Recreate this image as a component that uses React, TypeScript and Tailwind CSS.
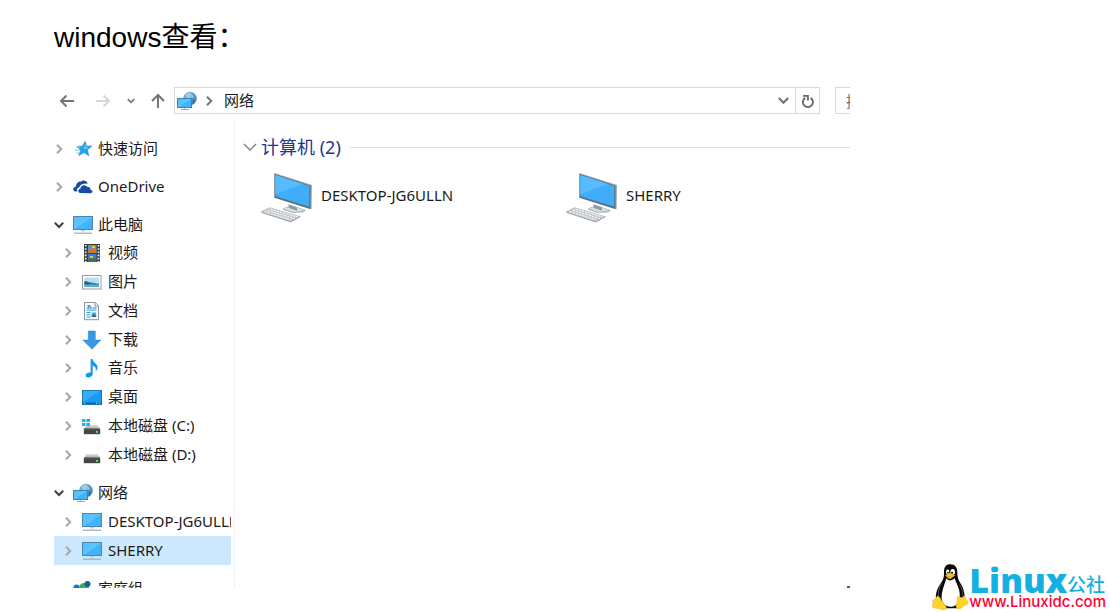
import React from "react";

type IconProps = { className?: string };

function Chevron({ open = false, className = "" }: { open?: boolean; className?: string }) {
  return (
    <svg viewBox="0 0 10 10" className={`h-[10px] w-[10px] shrink-0 ${className}`} fill="none" stroke="currentColor" strokeWidth="2" aria-hidden="true">
      <path d={open ? "M0.8 2.8 5 7 9.2 2.8" : "M3 0.8 7.2 5 3 9.2"} />
    </svg>
  );
}

function Gradients() {
  return (
    <svg className="absolute h-0 w-0" aria-hidden="true">
      <defs>
        <linearGradient id="screen" x1="0" y1="0" x2="1" y2="1">
          <stop offset="0" stopColor="#56bdf8" />
          <stop offset="0.5" stopColor="#5cc4ff" />
          <stop offset="0.52" stopColor="#45b5fa" />
          <stop offset="1" stopColor="#42aff8" />
        </linearGradient>
        <radialGradient id="globe" cx="0.4" cy="0.3" r="0.8">
          <stop offset="0" stopColor="#b4dcf0" />
          <stop offset="0.5" stopColor="#5a9cc8" />
          <stop offset="1" stopColor="#2a6fa5" />
        </radialGradient>
        <linearGradient id="drive" x1="0" y1="0" x2="0" y2="1">
          <stop offset="0" stopColor="#e2e2e2" />
          <stop offset="1" stopColor="#a5a5a5" />
        </linearGradient>
      </defs>
    </svg>
  );
}

function MonitorIcon() {
  return (
    <svg viewBox="0 0 20 20" className="h-5 w-5">
      <rect x="0.5" y="1.5" width="19" height="13" fill="url(#screen)" stroke="#4a87b0" />
      <path d="M8 15h4v1.5H8z" fill="#b8cedb" />
      <path d="M1 18.2h18" stroke="#9fb0bc" strokeWidth="1.3" />
    </svg>
  );
}

function NetworkIcon() {
  return (
    <svg viewBox="0 0 20 20" className="h-5 w-5">
      <circle cx="13" cy="7.5" r="6.7" fill="url(#globe)" />
      <path d="M9 3c2 1 3-1 5 0s0 3 3 3" stroke="#a5d4ea" strokeWidth="1" fill="none" />
      <path d="M16 8c1 1 1 2 0 4" stroke="#2c6f9e" strokeWidth="1.4" fill="none" />
      <rect x="0.5" y="7.5" width="14" height="9" fill="url(#screen)" stroke="#3385bd" />
      <path d="M4 18.5h8M7.5 17v1" stroke="#8fb4cb" />
    </svg>
  );
}

function StarIcon() {
  return (
    <svg viewBox="0 0 20 20" className="h-5 w-5">
      <path d="M12.2 2.4 13.4 7 18.8 7.2 14.4 10.8 15.8 16.8 11 13.6 5.8 16.6 7.6 11.4 4.4 7.4 9.2 7.2z" fill="#25a3ea" stroke="#1584ce" strokeWidth=".6" />
      <path d="M3 8.3h4M2 11h5.2M3.4 14h3" stroke="#77c7ef" strokeWidth="1" />
      <path d="m12 5 1 3 3 .4-5 2z" fill="#6ccafa" />
    </svg>
  );
}

function CloudIcon() {
  return (
    <svg viewBox="0 0 20 20" className="h-5 w-5">
      <path d="M1 14.2C-.6 12 .8 9.6 3 9.4 3 6.4 5.4 4.2 8 4.4 10 2.6 14 3.6 14.8 6.6L11 6.8C8.4 7 6.6 8.6 6.2 10.6 4.2 10.8 3.4 13 4.4 14.6z" fill="#174ba8" />
      <path d="M7.2 16C4.6 15.6 4.8 12 7.4 11.8 7.6 8.4 11.8 6.8 14 9.8c2-.4 3.6 1 3.4 3 2.6.2 2.8 3 .6 3.4z" fill="#174ba8" />
    </svg>
  );
}

function VideoIcon() {
  return (
    <svg viewBox="0 0 20 20" className="h-5 w-5">
      <path d="M2 1h16v18H2z" fill="#3d3d42" />
      <path d="M6 2h8.5v8H6z" fill="#5a91dc" />
      <path d="M6 11h8.5v8H6z" fill="#397bd0" />
      <path d="M6.3 7 8 5l2 2 2-4 2.4 4v3H6.3z" fill="#c87b2d" />
      <path d="M10 3h3v2h-3zM8 13h3v2H8z" fill="#efc73a" />
      <path d="M6 17l3-2 3 1 2.5-2v5H6z" fill="#427450" />
      <path d="M3.7 2v17M16.5 2v17" stroke="#f0f0f0" strokeWidth="1.7" strokeDasharray="1.6 1.6" />
    </svg>
  );
}

function PictureIcon() {
  return (
    <svg viewBox="0 0 20 20" className="h-5 w-5">
      <rect x=".5" y="3.5" width="18.5" height="13.5" fill="#fff" stroke="#929da3" />
      <path d="M2.5 5.5h14.5v9.5H2.5z" fill="#b8e1f7" />
      <path d="M2.5 9c3 0 4 1.4 7 1.6s5 1.4 7.5 1v3.4H2.5z" fill="#397f9f" />
      <path d="M2.5 13.2c5-1.4 9 0 14.5-.7v2.5H2.5z" fill="#5eaed8" />
      <path d="M2.5 9.4c3 0 4 1.6 7.5 2.4l-7.5.4z" fill="#28604f" />
    </svg>
  );
}

function DocumentIcon() {
  return (
    <svg viewBox="0 0 20 20" className="h-5 w-5">
      <path d="M2.5 1.5h10.8l3.2 3.2v14h-14z" fill="#fbfdff" stroke="#8c969d" />
      <path d="M13 1.5v3.7h3.5" fill="#e7ecef" stroke="#8c969d" />
      <path d="M4.5 7h6M5 4.8h3M4.5 9h10M4.5 11.5h4M4.5 13.8h4M4.5 16h4" stroke="#2b9bd6" strokeWidth="1.1" />
      <path d="m6 7 1.4-3L9 7M11 7h3.5" stroke="#2184c9" fill="none" />
      <path d="M9.7 11.5h4.5v4.6H9.7z" fill="#4ca9db" />
      <path d="m9.7 15 2-2 2.5 2v1.1H9.7z" fill="#426577" />
    </svg>
  );
}

function DownloadIcon() {
  return (
    <svg viewBox="0 0 20 20" className="h-5 w-5">
      <path d="M6.3 1h7v9h5.5L10 19.3.8 10h5.5z" fill="#3898e4" stroke="#2581cb" strokeWidth=".5" />
    </svg>
  );
}

function MusicIcon() {
  return (
    <svg viewBox="0 0 20 20" className="h-5 w-5">
      <path d="M8.6 1h1.9c.3 3.7 5.6 4.5 5 9-.2 1.4-1 2.5-1.8 3 .7-3.3-.5-4.6-3-5.3v8.1c0 2.5-2.5 4-4.8 3.8-2.4-.2-3-2.4-1.2-4 1-.9 2.3-1.3 3.9-1z" fill="#109af0" />
    </svg>
  );
}

function DesktopIcon() {
  return (
    <svg viewBox="0 0 20 20" className="h-5 w-5">
      <rect x=".5" y="3.5" width="19" height="14" fill="#1a9af0" stroke="#1878b9" />
      <path d="M1 4h17L1 15z" fill="#37adf8" />
      <path d="M1 15.5h18V17H1z" fill="#1361a1" />
      <path d="M2 16.2h1.3M14 16.2h1.3M17 16.2h1" stroke="#fff" strokeWidth=".8" />
    </svg>
  );
}

function DriveIcon({ system = false }: { system?: boolean }) {
  return (
    <svg viewBox="0 0 20 20" className="h-5 w-5">
      <path d="M4.5 9h11l2.5 4H2z" fill="url(#drive)" />
      <path d="M1.8 12.6h16.4v5.6H1.8z" fill="#444746" />
      <path d="M2 12.8h16" stroke="#777" />
      <path d="M14 15h2v1.8h-2z" fill="#5cf05c" />
      {system && <path d="M0 3h3.4v3H0zM4.4 3H8v3H4.4zM0 7h3.4v3H0zM4.4 7H8v3H4.4z" fill="#17b1ec" />}
    </svg>
  );
}

function HomegroupIcon() {
  return (
    <svg viewBox="0 0 20 20" className="h-5 w-5">
      <circle cx="3.5" cy="8.5" r="3" fill="#1d75bf" />
      <circle cx="11" cy="9" r="5" fill="#35b44a" />
      <circle cx="14.5" cy="5" r="3" fill="#1661a6" />
      <circle cx="8" cy="16" r="3.5" fill="#2b9bd6" />
    </svg>
  );
}

function ComputerIcon({ className = "" }: IconProps) {
  return (
    <svg viewBox="0 0 156 150" className={className} aria-hidden="true">
      <path d="M66 106 92 97l42 14-5 7-33 2-29-9z" fill="#aeb8bd" />
      <path d="m67 107 28-7 35 12-32 5z" fill="#d8dfe3" />
      <path d="m82 94 26 10v9l-24-8z" fill="#8d999f" />
      <path d="m40 1 112 35-1 71-4 1L40 74z" fill="#59707c" />
      <path d="m40 1 110 36v70" fill="none" stroke="#b5c7d0" strokeWidth="2" />
      <path d="m43 6 102 33v62L43 70z" fill="#41adfa" />
      <path d="m43 6 82 27-82 31z" fill="#57bbff" />
      <path d="m1 116 25-12 92 27-29 16z" fill="#c4c9cc" stroke="#aeb5b9" strokeWidth="2" />
      <path d="m11 116 80 25M20 112l82 25M8 120l77 23M28 108l82 24" stroke="#fafafa" strokeWidth="3" strokeDasharray="7 3" />
      <path d="m1 116 1 4 87 28 29-16v-3l-29 15z" fill="#9fa7ac" />
    </svg>
  );
}

function PenguinIcon({ className = "" }: IconProps) {
  return (
    <svg viewBox="0 0 112 138" className={className} aria-hidden="true">
      <path d="M57 1c14 0 21 10 21 24 0 17 4 24 11 36 9 15 15 36 6 58l-19 14H36L15 108c-5-18 4-37 14-51 9-13 9-20 9-33C38 9 44 1 57 1z" fill="#080808" />
      <path d="M45 43c7 8 15 9 25 0 3 13 13 25 15 44 2 22-5 39-24 41-19 1-32-9-30-31 1-19 10-39 14-54z" fill="#fff" />
      <ellipse cx="49" cy="24" rx="5" ry="8" fill="#fff" />
      <ellipse cx="64" cy="24" rx="7" ry="9" fill="#fff" />
      <circle cx="50" cy="26" r="2.5" />
      <circle cx="62" cy="26" r="3" />
      <path d="m42 34 13-7 17 7-14 10-8-1z" fill="#ffc51c" stroke="#bd8000" />
      <path d="m44 36 11 2 15-3" stroke="#a56600" fill="none" />
      <path d="M17 96c8-1 10 8 15 16 5 9 15 15 13 21-3 8-13 3-22 1-8-2-21 0-20-8 1-5 3-9 1-14 1-8 9-3 13-16z" fill="#ffd42a" stroke="#d89c00" />
      <path d="M77 102c2-9 8-1 14-2 6 0 5-6 9-4 1 10 11 14 10 20-1 5-12 8-19 15-7 6-17 4-17-4 0-9 5-17 3-25z" fill="#ffd42a" stroke="#d89c00" />
      <path d="M31 59c-8 13-12 26-10 38M84 62c9 13 11 23 8 34" stroke="#555" strokeWidth="3" fill="none" />
    </svg>
  );
}

type Node = { label: string; icon: React.ReactNode };

const folders: Node[] = [
  { label: "视频", icon: <VideoIcon /> },
  { label: "图片", icon: <PictureIcon /> },
  { label: "文档", icon: <DocumentIcon /> },
  { label: "下载", icon: <DownloadIcon /> },
  { label: "音乐", icon: <MusicIcon /> },
  { label: "桌面", icon: <DesktopIcon /> },
  { label: "本地磁盘 (C:)", icon: <DriveIcon system /> },
  { label: "本地磁盘 (D:)", icon: <DriveIcon /> },
];

const hosts: Node[] = [
  { label: "DESKTOP-JG6ULLN", icon: <MonitorIcon /> },
  { label: "SHERRY", icon: <MonitorIcon /> },
];

function RootRow({ label, icon, open = false, arrow = true }: Node & { open?: boolean; arrow?: boolean }) {
  return (
    <button type="button" className="flex h-[29px] w-full items-center text-left whitespace-nowrap">
      <span className="w-[19px] shrink-0">
        {arrow && <Chevron open={open} className={open ? "text-[#404040]" : "text-[#a6a6a6]"} />}
      </span>
      <span className="w-[25px] shrink-0">{icon}</span>
      <span className="pb-[2px]">{label}</span>
    </button>
  );
}

function ChildRow({ label, icon, selected = false }: Node & { selected?: boolean }) {
  return (
    <li className="min-h-0">
      <button type="button" className={`flex h-full w-full items-center overflow-hidden pl-[9px] text-left whitespace-nowrap ${selected ? "bg-[#cce8ff]" : ""}`}>
        <Chevron className="mr-[9px] text-[#a6a6a6]" />
        <span className="w-[26px] shrink-0">{icon}</span>
        <span className="min-w-0 overflow-hidden pb-[2px]">{label}</span>
      </button>
    </li>
  );
}

function Toolbar() {
  return (
    <div className="flex h-[37px] items-start pt-[2px]">
      <div className="flex h-[27px] w-[120px] shrink-0 items-center text-[#757575]">
        <button type="button" aria-label="后退" className="ml-[5px] w-4">
          <svg viewBox="0 0 16 16" className="h-4 w-4" fill="none" stroke="currentColor" strokeWidth="2"><path d="M15 8H2M7.5 2.5 2 8l5.5 5.5" /></svg>
        </button>
        <button type="button" aria-label="前进" className="ml-[20px] w-4 text-[#d6d6d6]">
          <svg viewBox="0 0 16 16" className="h-4 w-4" fill="none" stroke="currentColor" strokeWidth="2"><path d="M1 8h13M8.5 2.5 14 8l-5.5 5.5" /></svg>
        </button>
        <button type="button" aria-label="最近位置" className="ml-[16px] w-2">
          <svg viewBox="0 0 8 8" className="h-2 w-2" fill="none" stroke="currentColor" strokeWidth="1.8"><path d="M.8 2.2 4 5.3l3.2-3.1" /></svg>
        </button>
        <button type="button" aria-label="向上" className="ml-[15px] w-4">
          <svg viewBox="0 0 16 16" className="h-4 w-4" fill="none" stroke="currentColor" strokeWidth="2"><path d="M8 15V2M2 8l6-6 6 6" /></svg>
        </button>
      </div>
      <div className="flex h-[27px] min-w-0 flex-1 items-center border border-[#d9d9d9]">
        <span className="ml-[2px]"><NetworkIcon /></span>
        <Chevron className="ml-[7px] h-[9px] w-[9px] text-[#757575]" />
        <span className="ml-[10px] flex-1 pb-[2px]">网络</span>
        <button type="button" aria-label="展开地址" className="flex w-[23px] justify-center text-[#757575]"><Chevron open className="h-[11px] w-[11px]" /></button>
        <button type="button" aria-label="刷新" className="flex h-full w-[24px] items-center justify-center border-l border-[#d9d9d9] text-[#6b6b6b]">
          <svg viewBox="0 0 14 14" className="h-[14px] w-[14px]" fill="none" stroke="currentColor" strokeWidth="1.9"><path d="M9.6 3.9A5 5 0 1 1 4.2 3.9M2 1.9h4.9v4.6" /></svg>
        </button>
      </div>
      <div className="ml-[15px] h-[27px] w-[15px] shrink-0 overflow-hidden border-y border-l border-[#d9d9d9]">
        <input aria-label="搜索" placeholder="搜索" className="h-full w-20 pl-[10px] placeholder:text-[#707070]" />
      </div>
    </div>
  );
}

function Sidebar() {
  return (
    <nav aria-label="导航窗格" className="w-[181px] shrink-0 overflow-hidden border-r border-[#f0f0f0] pt-[12px] pr-[3px]">
      <ul className="space-y-[9px]">
        <li><RootRow label="快速访问" icon={<StarIcon />} /></li>
        <li><RootRow label="OneDrive" icon={<CloudIcon />} /></li>
        <li>
          <RootRow label="此电脑" icon={<MonitorIcon />} open />
          <ul className="grid h-[230px] auto-rows-fr grid-cols-1">{folders.map((n) => <ChildRow key={n.label} {...n} />)}</ul>
        </li>
        <li>
          <RootRow label="网络" icon={<NetworkIcon />} open />
          <ul className="grid h-[58px] auto-rows-fr grid-cols-1">{hosts.map((n) => <ChildRow key={n.label} {...n} selected={n.label === "SHERRY"} />)}</ul>
        </li>
        <li><RootRow label="家庭组" icon={<HomegroupIcon />} arrow={false} /></li>
      </ul>
    </nav>
  );
}

function Content() {
  return (
    <section className="flex min-w-0 flex-1 flex-col">
      <div className="mt-[12px] flex h-[26px] items-center pl-[8px]">
        <svg viewBox="0 0 14 14" className="h-[14px] w-[14px] text-[#858585]" fill="none" stroke="currentColor" strokeWidth="1.5" aria-hidden="true"><path d="m1 4 6 6 6-6" /></svg>
        <h2 className="ml-[4px] text-[18px] leading-6 whitespace-nowrap text-[#26358c]">计算机 (2)</h2>
        <span className="ml-[9px] h-px flex-1 bg-[#dedede]" />
      </div>
      <ul className="mt-[13px] flex pl-[26px]">
        {["DESKTOP-JG6ULLN", "SHERRY"].map((name) => (
          <li key={name} className="w-[305px] shrink-0">
            <button type="button" className="flex items-center gap-[8px]">
              <ComputerIcon className="h-[50px] w-[52px]" />
              <span className="pb-[6px]">{name}</span>
            </button>
          </li>
        ))}
      </ul>
      <span className="mt-auto h-[2px] w-[3px] self-end bg-[#555]" />
    </section>
  );
}

function Brand() {
  return (
    <a href="#linux" className="flex items-end self-end whitespace-nowrap">
      <PenguinIcon className="h-[46px] w-[38px]" />
      <span className="flex flex-col">
        <span className="flex h-[28px] items-end text-[#14b0e2]">
          <span className="font-['Open_Sans',sans-serif] text-[34px] leading-[28px] font-extrabold">Linux</span>
          <span className="font-['Noto_Sans_CJK_SC',sans-serif] text-[19px] leading-[20px] font-medium">公社</span>
        </span>
        <span className="font-['Inter',sans-serif] text-[15px] leading-[16px] font-medium text-[#ff0032]">www.Linuxidc.com</span>
      </span>
    </a>
  );
}

export default function App() {
  return (
    <main className="bg-white pl-[54px] font-['Noto_Sans','Noto_Sans_CJK_SC',sans-serif] text-[15px] leading-5 text-[#1a1a1a]">
      <Gradients />
      <h1 className="h-[85px] pt-[22px] font-['Liberation_Sans','Noto_Sans_CJK_SC',sans-serif] text-[28px] leading-8 text-black">windows查看：</h1>
      <div className="flex">
        <div className="mb-[22px] flex h-[503px] min-w-0 flex-1 flex-col overflow-hidden">
          <Toolbar />
          <div className="flex min-h-0 flex-1">
            <Sidebar />
            <Content />
          </div>
        </div>
        <aside className="flex w-[260px] shrink-0 justify-end pr-[4px]"><Brand /></aside>
      </div>
    </main>
  );
}
